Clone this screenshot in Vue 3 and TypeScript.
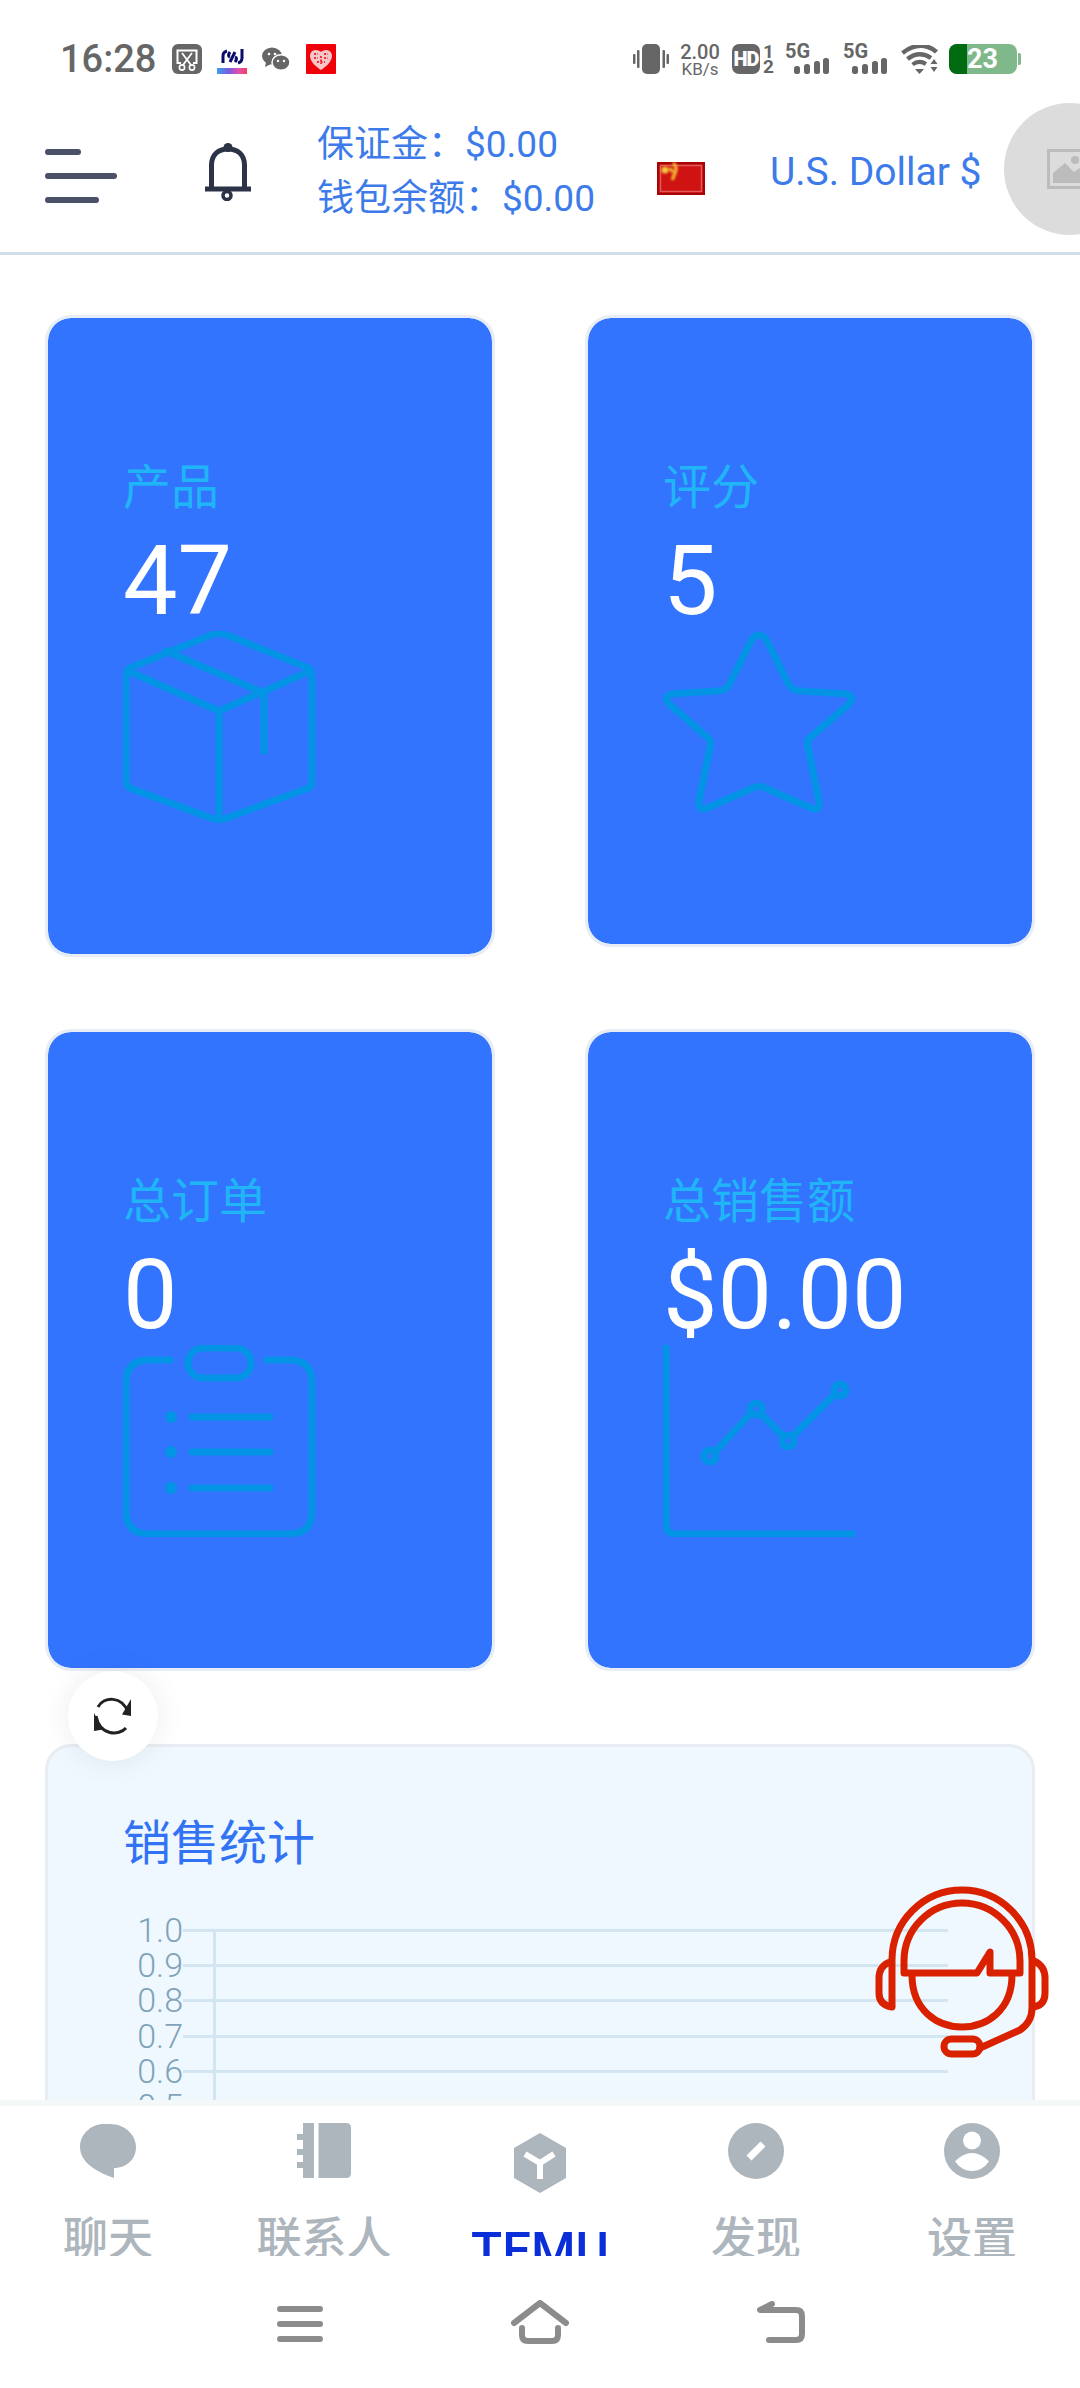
<script setup lang="ts">
const cards = [
  { key: 'box', label: '产品', value: '47' },
  { key: 'star', label: '评分', value: '5' },
  { key: 'clipboard', label: '总订单', value: '0' },
  { key: 'chart', label: '总销售额', value: '$0.00' },
];

const ticks = ['1.0', '0.9', '0.8', '0.7', '0.6', '0.5'];

const navItems = [
  { key: 'chat', label: '聊天' },
  { key: 'contacts', label: '联系人' },
  { key: 'temu', label: 'TEMU' },
  { key: 'discover', label: '发现' },
  { key: 'settings', label: '设置' },
];

const signalBars = [
  { x: 0, y: 8, h: 8 },
  { x: 10, y: 6, h: 10 },
  { x: 20, y: 3, h: 13 },
  { x: 29, y: 0, h: 16 },
];
</script>

<template>
  <div class="screen">
    <div class="status-bar">
      <span class="time">16:28</span>
      <svg class="st-icon" width="30" height="30" viewBox="0 0 30 30">
        <rect width="30" height="30" rx="6" fill="#666" />
        <path d="M9 19 H5.5 V6.5 H24.5 V19 H21" fill="none" stroke="#fff" stroke-width="2" />
        <path d="M10 9 L19 21 M20 9 L11 21" stroke="#fff" stroke-width="1.8" />
        <circle cx="10" cy="23.5" r="2.6" fill="#666" stroke="#fff" stroke-width="1.6" />
        <circle cx="20" cy="23.5" r="2.6" fill="#666" stroke="#fff" stroke-width="1.6" />
      </svg>
      <svg class="st-icon" width="30" height="30" viewBox="0 0 30 30">
        <defs>
          <linearGradient id="ribbon" x1="0" x2="1" y1="0" y2="0">
            <stop offset="0" stop-color="#3b9df0" />
            <stop offset=".4" stop-color="#7a5be0" />
            <stop offset=".75" stop-color="#e84fa8" />
            <stop offset="1" stop-color="#f04060" />
          </linearGradient>
        </defs>
        <path d="M10 7 Q6 8 6 12 V19 M13 18 L18 8 M13 8 Q10 12 13 13 M18 13 Q21 14 18 18 M25 5 V14 Q25 18 21 19" fill="none" stroke="#0b0b6b" stroke-width="3" />
        <rect y="24" width="30" height="6" fill="url(#ribbon)" />
      </svg>
      <svg class="st-icon" width="28" height="24" viewBox="0 0 28 24">
        <ellipse cx="10" cy="9" rx="10" ry="8.6" fill="#666" />
        <path d="M4 15 L3 20 L9 17Z" fill="#666" />
        <ellipse cx="19" cy="15.5" rx="9" ry="7.8" fill="#666" stroke="#fff" stroke-width="1.5" />
        <circle cx="7" cy="7" r="1.3" fill="#fff" />
        <circle cx="13" cy="7" r="1.3" fill="#fff" />
        <circle cx="16" cy="14" r="1.2" fill="#fff" />
        <circle cx="22" cy="14" r="1.2" fill="#fff" />
      </svg>
      <svg class="st-icon" width="30" height="30" viewBox="0 0 30 30">
        <rect width="30" height="30" rx="1" fill="#f00008" />
        <path d="M15 26 C9 22 4 17 4 12 C4 8 7 6 10 6 C12 6 14 7 15 8 C16 7 18 6 20 6 C23 6 26 8 26 12 C26 17 21 22 15 26Z" fill="#f6c6c8" />
        <path d="M8 10 H12 M8 14 H12 M18 10 H22 M18 14 H22 M15 12 V20 M11 18 H19" stroke="#f00008" stroke-width="1.5" stroke-dasharray="2 1.5" />
      </svg>

      <div class="st-right">
        <svg width="36" height="30" viewBox="0 0 36 30">
          <rect x="9" width="18" height="30" rx="5" fill="#666" />
          <rect y="10" width="2.5" height="10" rx="1" fill="#666" />
          <rect x="4" y="6" width="2.5" height="18" rx="1" fill="#666" />
          <rect x="29.5" y="6" width="2.5" height="18" rx="1" fill="#666" />
          <rect x="33.5" y="10" width="2.5" height="10" rx="1" fill="#666" />
        </svg>
        <div class="speed">
          <span class="speed-num">2.00</span>
          <span class="speed-unit">KB/s</span>
        </div>
        <span class="hd">HD</span>
        <div class="sim">
          <span>1</span>
          <span>2</span>
        </div>
        <div v-for="n in 2" :key="n" class="signal" :class="{ second: n === 2 }">
          <span class="signal-5g">5G</span>
          <svg class="signal-bars" width="35" height="16" viewBox="0 0 35 16">
            <rect v-for="b in signalBars" :key="b.x" :x="b.x" :y="b.y" width="6" :height="b.h" rx="2.5" fill="#666" />
          </svg>
        </div>
        <svg class="wifi" width="37" height="29" viewBox="0 0 37 29">
          <path d="M1.5 8 Q14 -2 27 2 Q32 3.5 35.5 7" fill="none" stroke="#666" stroke-width="4.5" />
          <path d="M6.5 14 Q18 5 30 13" fill="none" stroke="#666" stroke-width="4.5" />
          <path d="M11.5 19.5 Q18 14.5 25 19" fill="none" stroke="#666" stroke-width="4" />
          <path d="M14 24 H23 L18.5 29Z" fill="#666" />
          <path d="M29.5 19 L33 14 L36.5 19Z M29.5 22 H36.5 L33 27Z" fill="#666" />
        </svg>
        <div class="battery">
          <div class="battery-level"></div>
          <span class="battery-text">23</span>
          <div class="battery-tip"></div>
        </div>
      </div>
    </div>

    <header class="top-bar">
      <div class="burger">
        <span class="b1"></span>
        <span class="b2"></span>
        <span class="b3"></span>
      </div>
      <svg class="bell" width="46" height="58" viewBox="0 0 46 58">
        <path d="M6.5 45 V22 C6.5 12 13 6 23 6 C33 6 39.5 12 39.5 22 V45" fill="none" stroke="#2c3347" stroke-width="5" />
        <circle cx="23" cy="4.5" r="4.5" fill="#2c3347" />
        <path d="M0 46 H46" stroke="#2c3347" stroke-width="5" />
        <circle cx="22" cy="52.5" r="4" fill="none" stroke="#2c3347" stroke-width="3.5" />
      </svg>
      <div class="balances">
        <div>保证金：$0.00</div>
        <div>钱包余额：$0.00</div>
      </div>
      <svg class="flag" width="48" height="33" viewBox="0 0 48 33">
        <defs>
          <filter id="glow" x="-40%" y="-40%" width="180%" height="180%">
            <feGaussianBlur stdDeviation="0.9" />
          </filter>
        </defs>
        <rect width="48" height="33" fill="#a80404" />
        <rect x="2.5" y="2.5" width="43" height="28" fill="#cf1212" />
        <rect x="3.5" y="3.5" width="41" height="26" fill="none" stroke="#e25a5a" stroke-width="1.5" />
        <g filter="url(#glow)">
          <circle cx="8" cy="8" r="3.6" fill="#f5c33c" />
          <path d="M16 1 Q21 5 18 11 Q16 15 15.5 18" fill="none" stroke="#f2b535" stroke-width="3.4" />
          <path d="M12.5 6 L16 10" stroke="#f2b535" stroke-width="3.4" />
        </g>
      </svg>
      <div class="currency">U.S. Dollar $</div>
      <div class="avatar">
        <svg width="46" height="40" viewBox="0 0 46 40">
          <rect x="1.5" y="1.5" width="43" height="37" fill="none" stroke="#bcbcbc" stroke-width="3" />
          <path d="M6 34 V24 L18 14 L27 23 L33 19 L40 25 V34Z" fill="#bcbcbc" />
          <circle cx="28" cy="11" r="4" fill="#bcbcbc" />
        </svg>
      </div>
    </header>

    <main class="content">
      <section class="stat-grid">
        <div v-for="c in cards" :key="c.key" class="stat-card">
          <div class="stat-label">{{ c.label }}</div>
          <div class="stat-value">{{ c.value }}</div>
          <svg v-if="c.key === 'box'" class="stat-icon" width="192" height="192" viewBox="0 0 192 192">
            <path d="M3 44 Q3 38 9 36 L88 4 Q96 1 104 4 L183 36 Q189 38 189 44 V150 Q189 156 183 158 L104 187 Q96 190 88 187 L9 158 Q3 156 3 150 Z" />
            <path d="M5 40 L96 80 L187 40 M96 80 V188 M43 20 L141 62 V120" />
          </svg>
          <svg v-else-if="c.key === 'star'" class="stat-icon" width="192" height="182" viewBox="0 0 192 182">
            <path d="M89 8 Q96 0 103 8 L125 52 Q129 60 137 60 L184 63 Q192 66 186 73 L148 106 Q143 110 145 116 L156 170 Q157 181 148 177 L102 157 Q96 154 90 157 L44 177 Q35 181 36 170 L47 116 Q49 110 44 106 L6 73 Q0 66 8 63 L55 60 Q63 60 67 52 Z" />
          </svg>
          <svg v-else-if="c.key === 'clipboard'" class="stat-icon" width="192" height="192" viewBox="0 0 192 192">
            <path d="M47 15 H26 Q3 15 3 38 V166 Q3 189 26 189 H166 Q189 189 189 166 V38 Q189 15 166 15 H144" />
            <rect x="65" y="3" width="63" height="30" rx="15" />
            <path d="M69 72 H147 M69 107 H147 M69 143 H147" />
            <circle class="solid" cx="48" cy="72" r="6" />
            <circle class="solid" cx="48" cy="107" r="6" />
            <circle class="solid" cx="48" cy="143" r="6" />
          </svg>
          <svg v-else class="stat-icon" width="192" height="192" viewBox="0 0 192 192">
            <path d="M3 3 V179 Q3 189 13 189 H190" />
            <path d="M52 107 L88 68 M98 69 L120 91 M130 91 L172 49" />
            <circle cx="47" cy="111" r="6" />
            <circle cx="93" cy="64" r="6" />
            <circle cx="125" cy="96" r="6" />
            <circle cx="177" cy="45" r="6" />
          </svg>
        </div>
      </section>

      <section class="sales-card">
        <h2 class="sales-title">销售统计</h2>
        <div class="sales-chart">
          <div class="y-axis"></div>
          <div v-for="t in ticks" :key="t" class="tick-row">
            <span class="tick-label">{{ t }}</span>
            <span class="tick-line"></span>
          </div>
        </div>
      </section>
    </main>

    <nav class="tab-bar">
      <div v-for="item in navItems" :key="item.key" class="tab" :class="{ active: item.key === 'temu' }">
        <svg v-if="item.key === 'chat'" width="56" height="56" viewBox="0 0 56 54">
          <path d="M24 0 H30 C45 0 56 11 56 23 C56 35 47 44 34 44 V54 C20 49 0 40 0 23 C0 10 11 0 24 0Z" fill="#adb5bd" />
        </svg>
        <svg v-else-if="item.key === 'contacts'" width="54" height="56" viewBox="0 0 54 56">
          <rect x="6" width="11" height="55" fill="#adb5bd" />
          <path d="M21.5 0 H49 Q54 0 54 5 V50 Q54 55 49 55 H21.5Z" fill="#adb5bd" />
          <path d="M0 11 H6 V17 H0Z M0 26 H6 V32 H0Z M0 39 H6 V45 H0Z" fill="#adb5bd" />
        </svg>
        <svg v-else-if="item.key === 'temu'" width="52" height="60" viewBox="0 0 52 60">
          <path d="M26 0 L52 15 V45 L26 60 L0 45 V15Z" fill="#adb5bd" />
          <path d="M11 21 L26 30 L40 21 M26 30 V46" fill="none" stroke="#fff" stroke-width="6" />
        </svg>
        <svg v-else-if="item.key === 'discover'" width="56" height="56" viewBox="0 0 56 56">
          <circle cx="28" cy="28" r="28" fill="#adb5bd" />
          <path d="M21 35 L35 21" stroke="#fff" stroke-width="7" />
        </svg>
        <svg v-else width="56" height="56" viewBox="0 0 56 56">
          <circle cx="28" cy="28" r="28" fill="#adb5bd" />
          <circle cx="28" cy="17.5" r="9" fill="#fff" />
          <path d="M11 38.5 Q19 30 28 30 Q37 30 45 38.5 Q38 48 28 48 Q18 48 11 38.5Z" fill="#fff" />
        </svg>
        <span class="tab-label">{{ item.label }}</span>
      </div>
    </nav>

    <div class="gesture-bar">
      <svg width="46" height="36" viewBox="0 0 46 36">
        <path d="M3 3 H43 M3 18 H43 M3 33 H43" stroke="#8c8c8c" stroke-width="6" stroke-linecap="round" />
      </svg>
      <svg width="58" height="44" viewBox="0 0 58 44">
        <path d="M3 23 L29 3 L55 23" fill="none" stroke="#8c8c8c" stroke-width="6" stroke-linecap="round" stroke-linejoin="round" />
        <path d="M11 28 V35 Q11 41 17 41 H41 Q47 41 47 35 V28" fill="none" stroke="#8c8c8c" stroke-width="6" stroke-linecap="round" />
      </svg>
      <svg width="50" height="44" viewBox="0 0 50 44">
        <path d="M16 3 L4 9 H40 Q46 9 46 15 V33 Q46 39 40 39 H13" fill="none" stroke="#8c8c8c" stroke-width="6" stroke-linecap="round" stroke-linejoin="round" />
      </svg>
    </div>

    <button class="refresh-btn" type="button">
      <svg width="40" height="40" viewBox="0 0 40 40">
        <path d="M5 11 C11 0 29 0 35 16" fill="none" stroke="#222" stroke-width="3" />
        <path d="M38 3 V20 L29 18.5Z" fill="#222" />
        <path d="M33 32 C26 40 7 40 3 20" fill="none" stroke="#222" stroke-width="3" />
        <path d="M1 17 V35 L10 33.5Z" fill="#222" />
      </svg>
    </button>

    <svg class="support" width="180" height="175" viewBox="95 45 180 175">
      <g fill="none" stroke="#d92100" stroke-width="7" stroke-linejoin="round" stroke-linecap="round">
        <path d="M115 165 V120 A70 70 0 0 1 255 120 V168 Q255 182 243 190 L203 208" />
        <path d="M127 133 V121 A58 58 0 0 1 243 121 V133 H213 V112 L200 133 Z" />
        <path d="M135 135 C135 170 160 187 185 187 C210 187 235 170 235 135" />
        <path d="M113 122 Q102 126 102 138 V153 Q102 165 115 167" />
        <path d="M257 121 Q268 126 268 138 V153 Q268 165 257 167" />
        <rect x="167" y="199" width="36" height="15" rx="7.5" />
      </g>
    </svg>
  </div>
</template>

<style scoped>
.screen {
  position: relative;
  width: 1080px;
  height: 2388px;
  overflow: hidden;
  display: flex;
  flex-direction: column;
  background: #fff;
  font-family: Roboto, "Noto Sans CJK SC", sans-serif;
}

/* status bar */
.status-bar {
  height: 100px;
  flex-shrink: 0;
  display: flex;
  align-items: flex-start;
  padding: 44px 60px 0;
  box-sizing: border-box;
  color: #666;
}

.time {
  font-size: 38px;
  font-weight: 500;
  line-height: 30px;
  width: 112px;
}

.st-icon {
  display: block;
  margin-right: 15px;
}

.st-icon:nth-of-type(3) {
  margin-top: 3px;
  margin-right: 16px;
}

.st-right {
  position: absolute;
  left: 633px;
  top: 44px;
  display: flex;
  align-items: flex-start;
}

.speed {
  margin-left: 11px;
  width: 40px;
  display: flex;
  flex-direction: column;
  align-items: center;
}

.speed-num {
  font-size: 20px;
  font-weight: 500;
  line-height: 16px;
}

.speed-unit {
  font-size: 17px;
  line-height: 16px;
  margin-top: 1px;
}

.hd {
  margin-left: 12px;
  width: 28px;
  height: 30px;
  border-radius: 7px;
  background: #666;
  color: #fff;
  font-size: 20px;
  font-weight: 900;
  line-height: 30px;
  text-align: center;
  letter-spacing: -1px;
}

.sim {
  margin-left: 3px;
  width: 11px;
  display: flex;
  flex-direction: column;
  font-size: 19px;
  font-weight: 700;
  line-height: 15px;
}

.signal {
  position: relative;
  margin-left: 11px;
  width: 45px;
  height: 30px;
}

.signal.second {
  margin-left: 13px;
}

.signal-5g {
  position: absolute;
  left: 0;
  top: 0;
  font-size: 20px;
  font-weight: 700;
  line-height: 15px;
}

.signal-bars {
  position: absolute;
  left: 9px;
  bottom: 0;
}

.wifi {
  margin-left: 13px;
  margin-top: 1px;
}

.battery {
  position: relative;
  margin-left: 11px;
  width: 68px;
  height: 30px;
  border-radius: 8px;
  background: #7fb88a;
}

.battery-level {
  position: absolute;
  left: 0;
  top: 0;
  width: 18px;
  height: 30px;
  border-radius: 8px 0 0 8px;
  background: #006b10;
}

.battery-text {
  position: absolute;
  left: 18px;
  top: 0;
  color: #fff;
  font-size: 27px;
  font-weight: 700;
  line-height: 30px;
}

.battery-tip {
  position: absolute;
  left: 69px;
  top: 9px;
  width: 3px;
  height: 12px;
  border-radius: 0 2px 2px 0;
  background: #7fb88a;
}

/* header */
.top-bar {
  height: 155px;
  flex-shrink: 0;
  box-sizing: border-box;
  border-bottom: 3px solid #d3dfe8;
  display: flex;
  align-items: center;
  padding-left: 45px;
}

.burger {
  width: 72px;
  margin-right: 88px;
  display: flex;
  flex-direction: column;
  gap: 18px;
  margin-top: 0;
}

.burger span {
  display: block;
  height: 6px;
  border-radius: 3px;
  background: #4a5068;
}

.b1 {
  width: 36px;
}

.b2 {
  width: 72px;
}

.b3 {
  width: 54px;
}

.bell {
  flex-shrink: 0;
  margin-right: 66px;
  margin-top: -9px;
}

.balances {
  width: 340px;
  flex-shrink: 0;
  font-size: 37px;
  line-height: 54px;
  color: #3d7bea;
  margin-top: -8px;
  white-space: nowrap;
}

.flag {
  flex-shrink: 0;
  margin-top: 4px;
}

.currency {
  width: 234px;
  flex-shrink: 0;
  margin-left: 65px;
  margin-top: -9px;
  font-size: 39px;
  color: #3d7bea;
  white-space: nowrap;
}

.avatar {
  width: 132px;
  height: 132px;
  flex-shrink: 0;
  margin-top: -14px;
  border-radius: 50%;
  background: #dcdcdc;
  display: flex;
  align-items: center;
  justify-content: center;
}

/* cards */
.content {
  flex: 1;
  min-height: 0;
  overflow: hidden;
  padding: 60px 45px 0;
}

.stat-grid {
  display: grid;
  grid-template-columns: 450px 450px;
  column-gap: 90px;
  row-gap: 72px;
  align-items: start;
}

.stat-card {
  box-sizing: border-box;
  border: 3px solid #e8edf5;
  border-radius: 26px;
  background: #3374ff;
  background-clip: padding-box;
  padding: 140px 75px 131px;
}

.stat-label {
  font-size: 48px;
  line-height: 60px;
  color: #1fb5f7;
}

.stat-value {
  font-size: 97px;
  line-height: 96px;
  color: #fff;
  margin-top: 15px;
}

.stat-icon {
  display: block;
  margin-top: 2px;
  fill: none;
  stroke: #0494e6;
  stroke-width: 7;
  stroke-linejoin: round;
  stroke-linecap: round;
}

.stat-icon .solid {
  fill: #0494e6;
  stroke: none;
}

/* sales */
.sales-card {
  box-sizing: border-box;
  margin-top: 73px;
  height: 700px;
  border: 3px solid #e8edf3;
  border-radius: 26px;
  background: #eff8fe;
  padding: 67px 75px 0;
}

.sales-title {
  margin: 0;
  font-size: 48px;
  font-weight: 400;
  line-height: 60px;
  color: #3273f6;
}

.sales-chart {
  position: relative;
  margin-top: 39px;
  width: 825px;
}

.y-axis {
  position: absolute;
  left: 90px;
  top: 17px;
  bottom: 0;
  width: 3px;
  background: #d3e5f0;
}

.tick-row {
  height: 35.2px;
  display: flex;
  align-items: center;
}

.tick-label {
  width: 60px;
  flex-shrink: 0;
  text-align: right;
  font-size: 34px;
  font-weight: 300;
  line-height: 35px;
  color: #7fa3b9;
}

.tick-line {
  flex: 1;
  height: 3px;
  background: #d3e5f0;
}

/* tab bar */
.tab-bar {
  height: 156px;
  flex-shrink: 0;
  box-sizing: border-box;
  border-top: 6px solid #f4f8f9;
  background: #fff;
  display: grid;
  grid-template-columns: repeat(5, 216px);
  position: relative;
}

.tab {
  height: 150px;
  overflow: hidden;
  display: flex;
  flex-direction: column;
  align-items: center;
  padding-top: 17px;
  box-sizing: border-box;
}

.tab svg {
  flex-shrink: 0;
  display: block;
}

.tab-label {
  margin-top: 31px;
  font-size: 45px;
  font-weight: 500;
  line-height: 60px;
  color: #adb5bd;
  white-space: nowrap;
}

.tab.active {
  padding-top: 27px;
}

.tab.active .tab-label {
  margin-top: 29px;
  font-size: 51px;
  color: #0a2fd8;
}

.gesture-bar {
  height: 132px;
  flex-shrink: 0;
  position: relative;
  display: grid;
  grid-template-columns: 277px 46px 188px 58px 187px 50px;
  align-content: start;
  padding-top: 44px;
  box-sizing: border-box;
}

.gesture-bar svg:nth-child(1) {
  grid-column: 2;
  margin-top: 6px;
}

.gesture-bar svg:nth-child(2) {
  grid-column: 4;
  margin-top: 0;
}

.gesture-bar svg:nth-child(3) {
  grid-column: 6;
  margin-top: 1px;
}

/* floating bits */
.refresh-btn {
  position: absolute;
  left: 68px;
  top: 1671px;
  width: 90px;
  height: 90px;
  padding: 0;
  border: 0;
  border-radius: 50%;
  background: #fff;
  box-shadow: 0 0 30px rgba(0, 0, 0, 0.08);
  display: flex;
  align-items: center;
  justify-content: center;
}

.support {
  position: absolute;
  left: 872px;
  top: 1885px;
}
</style>

<style>
html,
body {
  margin: 0;
  background: #fff;
}
</style>
